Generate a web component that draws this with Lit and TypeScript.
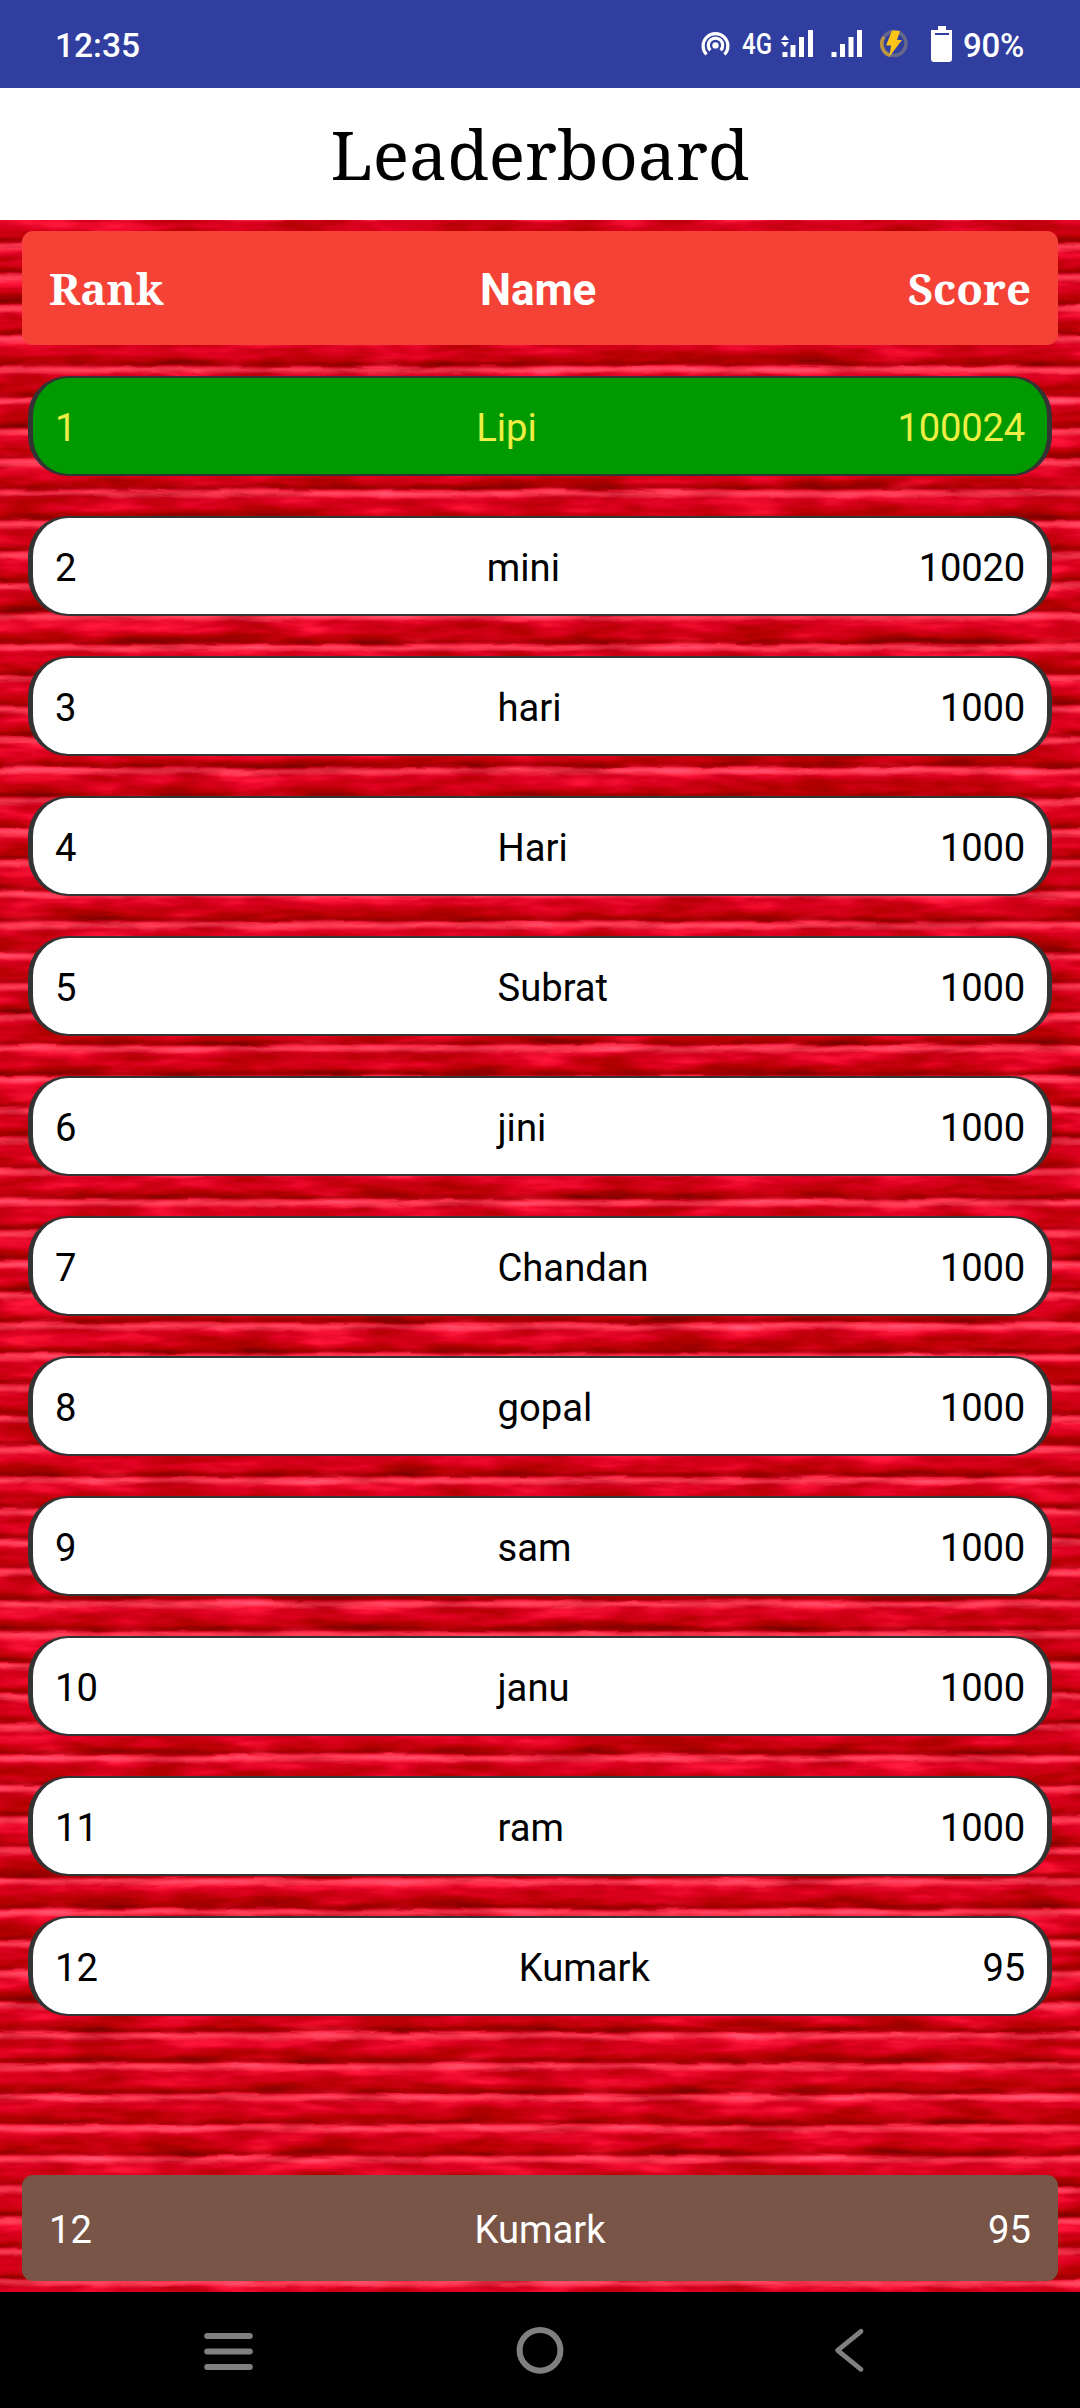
import { LitElement, html, svg, css } from "lit";
import { customElement, property } from "lit/decorators.js";
import { classMap } from "lit/directives/class-map.js";

interface Entry {
  rank: number;
  name: string;
  score: number;
}

const ENTRIES: Entry[] = [
  { rank: 1, name: "Lipi", score: 100024 },
  { rank: 2, name: "mini", score: 10020 },
  { rank: 3, name: "hari", score: 1000 },
  { rank: 4, name: "Hari", score: 1000 },
  { rank: 5, name: "Subrat", score: 1000 },
  { rank: 6, name: "jini", score: 1000 },
  { rank: 7, name: "Chandan", score: 1000 },
  { rank: 8, name: "gopal", score: 1000 },
  { rank: 9, name: "sam", score: 1000 },
  { rank: 10, name: "janu", score: 1000 },
  { rank: 11, name: "ram", score: 1000 },
  { rank: 12, name: "Kumark", score: 95 },
];

@customElement("status-bar")
class StatusBar extends LitElement {
  static styles = css`
    :host {
      display: flex;
      align-items: center;
      justify-content: space-between;
      height: 88px;
      padding: 3px 56px 0 55px;
      box-sizing: border-box;
      background: #303f9f;
      color: #fff;
      font: 500 33.5px/40px Roboto, sans-serif;
    }
    .icons {
      display: flex;
      align-items: center;
    }
    svg {
      display: block;
    }
    .glyphs {
      margin-top: -3px;
    }
    .net {
      font: 500 29px Roboto, sans-serif;
    }
    .battery {
      width: 61px;
      font-size: 33px;
      letter-spacing: -0.3px;
      white-space: nowrap;
    }
  `;

  render() {
    return html`
      <span class="clock">12:35</span>
      <div class="icons">
        <svg class="glyphs" width="263" height="88" viewBox="700 0 263 88">
          <g fill="none" stroke="#fff" stroke-width="3.2">
            <path d="M706.5 54.5A12.4 12.4 0 1 1 724.5 54.5" />
            <path d="M710.3 50.3A7.200 7.200 0 1 1 720.700 50.300" />
          </g>
          <circle cx="715.5" cy="45.400" r="3.200" fill="#fff" />
          <text class="net" x="742" y="53.500" fill="#fff" textLength="30" lengthAdjust="spacingAndGlyphs">4G</text>
          <g fill="#fff">
            <path d="M781 40l4-5 4 5zM781 42l4 5 4-5z" />
            <path d="M782.500 52h5v5h-5zM790.500 45h5v12h-5zM799 37h5v20h-5zM808 30h5v27h-5z" />
            <path d="M831.500 52h5v5h-5zM840 44h5v13h-5zM848.500 37h5v20h-5zM857 30h5v27h-5z" />
          </g>
          <circle cx="894" cy="43.500" r="12" fill="none" stroke="#67678c" stroke-width="3.500" />
          <path d="M884 37A12 12 0 0 0 890 55.500" fill="none" stroke="#b9963f" stroke-width="3.500" />
          <path d="M892 30.500l8 .500-3 9h5L889.500 56.500l1.500-11h-5z" fill="#fcc419" />
          <path d="M938 26h8v4h6v29a3 3 0 0 1-3 3h-15a3 3 0 0 1-3-3V30h7z" fill="#fff" />
          <path d="M935 34h14" stroke="#303f9f" stroke-width="2" />
        </svg>
        <span class="battery">90%</span>
      </div>
    `;
  }
}

@customElement("ribbed-backdrop")
class RibbedBackdrop extends LitElement {
  static styles = css`
    :host {
      display: block;
      height: 100%;
    }
    svg {
      display: block;
      width: 100%;
      height: 100%;
    }
  `;

  render() {
    return html`
      <svg viewBox="0 0 1080 2072" preserveAspectRatio="none">
        <defs>
          <linearGradient id="rib" x1="0" y1="0" x2="0" y2="1">
            <stop offset="0" stop-color="#e02038" />
            <stop offset="0.100" stop-color="#fc4c5e" />
            <stop offset="0.180" stop-color="#f03a50" />
            <stop offset="0.280" stop-color="#da102a" />
            <stop offset="0.600" stop-color="#d00620" />
            <stop offset="0.780" stop-color="#bc0010" />
            <stop offset="0.900" stop-color="#9c0004" />
            <stop offset="0.960" stop-color="#a80812" />
            <stop offset="1" stop-color="#d41c32" />
          </linearGradient>
          <pattern id="ribs" width="1200" height="30.850" patternUnits="userSpaceOnUse" y="23">
            <rect width="1200" height="31" fill="url(#rib)" />
          </pattern>
          <filter id="weave" x="0" y="0" width="100%" height="100%" color-interpolation-filters="sRGB">
            <feTurbulence type="fractalNoise" baseFrequency="0.014 0.070" numOctaves="3" seed="8" result="noise" />
            <feDisplacementMap in="SourceGraphic" in2="noise" scale="5" xChannelSelector="R" yChannelSelector="G" result="bent" />
            <feColorMatrix in="noise" type="matrix" values="1.500 0 0 0 -0.330  0.900 0 0 0 -0.210  1.100 0 0 0 -0.260  0 0 0 0 1" result="grain" />
            <feComposite in="bent" in2="grain" operator="arithmetic" k1="0" k2="1" k3="0.340" k4="-0.135" />
            <feComponentTransfer>
              <feFuncA type="linear" slope="0" intercept="1" />
            </feComponentTransfer>
          </filter>
        </defs>
        <rect width="1080" height="2072" fill="#c8001a" />
        <g filter="url(#weave)">
          <rect x="-20" y="-20" width="1120" height="2112" fill="url(#ribs)" />
        </g>
      </svg>
    `;
  }
}

@customElement("score-row")
class ScoreRow extends LitElement {
  @property({ attribute: false }) entry!: Entry;
  @property({ type: Boolean }) leader = false;

  static styles = css`
    .row {
      display: grid;
      grid-template-columns: 1fr 1fr auto;
      align-items: center;
      height: 100px;
      box-sizing: border-box;
      padding: 4px 22px 0;
      border: solid #333;
      border-width: 2px 5px;
      border-radius: 40px;
      background: #fff;
      color: #000;
      font: 400 38.2px/45px Roboto, sans-serif;
    }
    .score {
      letter-spacing: -0.2px;
    }
    .leader {
      background: #009a00;
      color: #eeee44;
    }
  `;

  render() {
    const { rank, name, score } = this.entry;
    return html`
      <div class=${classMap({ row: true, leader: this.leader })}>
        <span>${rank}</span><span>${name}</span><span class="score">${score}</span>
      </div>
    `;
  }
}

@customElement("nav-bar")
class NavBar extends LitElement {
  static styles = css`
    :host {
      display: flex;
      align-items: center;
      justify-content: space-around;
      height: 116px;
      padding: 0 73px;
      box-sizing: border-box;
      background: #000;
    }
    svg {
      display: block;
    }
  `;

  render() {
    const icons = [
      svg`<path d="M6.200 16h42.600M6.200 31.500h42.600M6.200 47h42.600" />`,
      svg`<circle cx="28" cy="30.300" r="20.400" />`,
      svg`<path d="M38 11.300L14.600 30.300L38 49.300" stroke-width="4.800" />`,
    ];
    return icons.map(
      (icon) => html`
        <svg width="56" height="60" viewBox="0 0 56 60" fill="none" stroke="#808080" stroke-width="6" stroke-linecap="round" stroke-linejoin="round">
          ${icon}
        </svg>
      `
    );
  }
}

@customElement("app-root")
class AppRoot extends LitElement {
  static styles = css`
    :host {
      display: flex;
      flex-direction: column;
      height: 2408px;
      overflow: hidden;
      font-family: Roboto, sans-serif;
    }
    .title {
      margin: 0;
      height: 132px;
      background: #fff;
      color: #000;
      text-align: center;
      font: 400 67.8px/133px "Noto Serif", "DejaVu Serif Condensed", "DejaVu Serif", serif;
      font-stretch: condensed;
    }
    .board {
      position: relative;
      flex: 1;
      display: flex;
      flex-direction: column;
      padding: 11px 22px;
      box-sizing: border-box;
    }
    .backdrop {
      position: absolute;
      inset: 0;
    }
    .head,
    .mine {
      position: relative;
      display: flex;
      align-items: center;
      justify-content: space-between;
      box-sizing: border-box;
      padding: 4px 27px 0;
      border-radius: 11px;
      color: #fff;
    }
    .head {
      height: 114px;
      padding-top: 0;
      background: #f44336;
      font-size: 43.8px;
      font-weight: 700;
    }
    .serif {
      font-family: "Noto Serif", "DejaVu Serif Condensed", "DejaVu Serif", serif;
      font-stretch: condensed;
    }
    .name {
      padding: 3px 0 0 5px;
      font-size: 44px;
    }
    .list {
      position: relative;
      flex: 1;
      display: flex;
      flex-direction: column;
      gap: 40px;
      padding: 31px 6px 0;
    }
    .mine {
      height: 106px;
      background: #795548;
      font-size: 38.2px;
    }
  `;

  render() {
    const mine = ENTRIES[ENTRIES.length - 1];
    return html`
      <status-bar></status-bar>
      <h1 class="title">Leaderboard</h1>
      <main class="board">
        <ribbed-backdrop class="backdrop"></ribbed-backdrop>
        <div class="head">
          <span class="serif">Rank</span><span class="name">Name</span><span class="serif">Score</span>
        </div>
        <div class="list">
          ${ENTRIES.map((e) => html`<score-row .entry=${e} ?leader=${e.rank === 1}></score-row>`)}
        </div>
        <div class="mine">
          <span>${mine.rank}</span><span>${mine.name}</span><span>${mine.score}</span>
        </div>
      </main>
      <nav-bar></nav-bar>
    `;
  }
}
